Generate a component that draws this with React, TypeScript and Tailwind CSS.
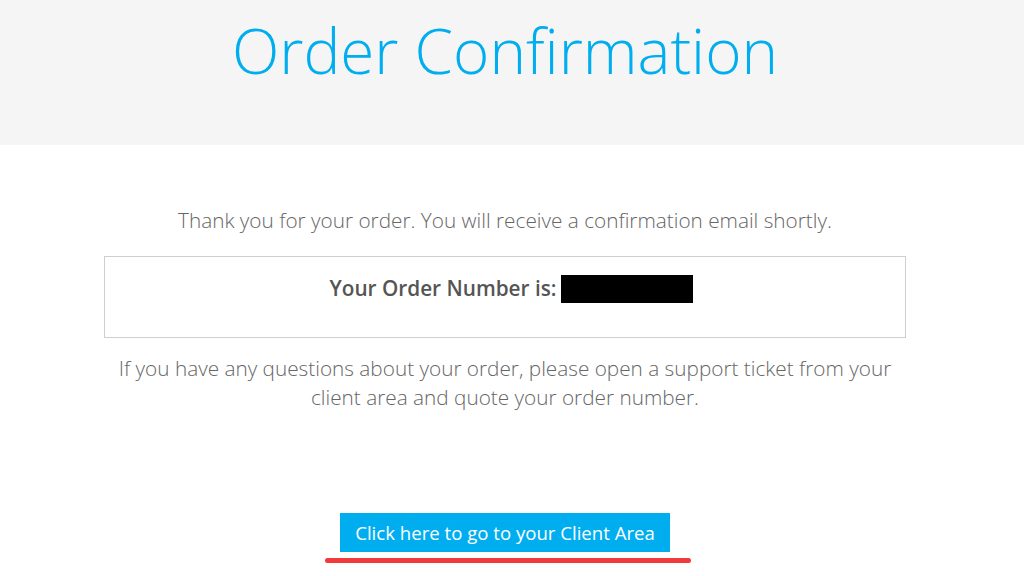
export default function App() {
  return (
    <div className="min-h-[576px] w-[1024px] bg-white font-['Open_Sans',sans-serif] overflow-hidden">
      <header className="h-[145px] bg-[#f5f5f5]">
        <div className="w-[1010px] flex justify-center">
          <h1 className="mt-[12px] text-[62px] leading-[76px] font-light text-[#00adef]">
            Order Confirmation
          </h1>
        </div>
      </header>

      <main className="w-[1010px] pt-[61px] flex flex-col items-center text-center">
        <p className="text-[20.75px] leading-[28px] font-light text-[#666]">
          Thank you for your order. You will receive a confirmation email shortly.
        </p>

        <div className="mt-[22px] w-[802px] h-[82px] border border-[#cfcfcf] flex justify-center pt-[17px]">
          <div className="ml-[12px] flex items-start gap-[4px]">
            <span className="text-[20.75px] leading-[28px] font-semibold text-[#555]">Your Order Number is:</span>
            <span className="mt-[1px] w-[132px] h-[28px] bg-black" />
          </div>
        </div>

        <p className="mt-[16px] w-[790px] text-[20.75px] leading-[29px] font-light text-[#666]">
          If you have any questions about your order, please open a support ticket from your client area and quote your order number.
        </p>

        <div className="mt-[101px] flex flex-col items-center">
          <a
            href="#"
            className="w-[330px] h-[39px] bg-[#00aeef] text-white text-[18.6px] font-normal flex items-center justify-center"
          >
            Click here to go to your Client Area
          </a>
          <span className="mt-[6px] ml-[5px] w-[366px] h-[5px] rounded-full bg-[#f23a3c]" />
        </div>
      </main>
    </div>
  )
}
